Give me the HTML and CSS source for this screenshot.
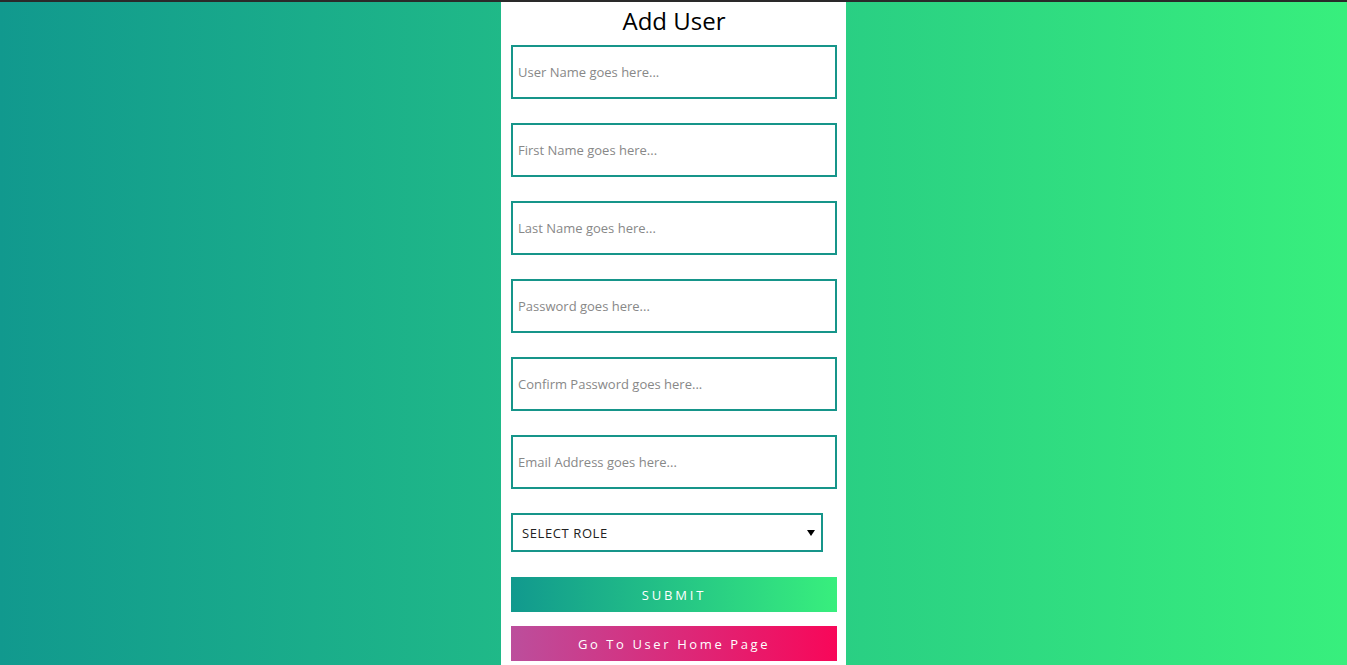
FILE: index.html
```html
<!DOCTYPE html>
<html lang="en">
<head>
<meta charset="utf-8">
<title>Add User</title>
<link rel="stylesheet" href="styles.css">
</head>
<body>
<div class="page">
  <form class="card">
    <h2 class="title">Add User</h2>
    <input class="field" type="text" placeholder="User Name goes here...">
    <input class="field" type="text" placeholder="First Name goes here...">
    <input class="field" type="text" placeholder="Last Name goes here...">
    <input class="field" type="password" placeholder="Password goes here...">
    <input class="field" type="password" placeholder="Confirm Password goes here...">
    <input class="field" type="email" placeholder="Email Address goes here...">
    <select class="role">
      <option>SELECT ROLE</option>
    </select>
    <button class="btn btn-submit" type="button">SUBMIT</button>
    <button class="btn btn-home" type="button">Go To User Home Page</button>
  </form>
</div>
</body>
</html>
```
FILE: styles.css
```css
html, body {
  margin: 0;
  padding: 0;
  height: 100%;
  overflow: hidden;
}
body {
  font-family: "Open Sans", "Liberation Sans", sans-serif;
  border-top: 2px solid #2a2a2a;
  box-sizing: border-box;
  background: linear-gradient(to right, #11998e, #38ef7d);
}
.page {
  display: flex;
  justify-content: center;
  height: 100%;
}
.card {
  width: 345px;
  box-sizing: border-box;
  background: #fff;
  padding: 0 9px 10px 10px;
  display: flex;
  flex-direction: column;
  align-items: flex-start;
}
.card > * {
  flex-shrink: 0;
}
.title {
  align-self: stretch;
  margin: 0 0 5px 0;
  text-align: center;
  font-weight: 400;
  font-size: 24px;
  line-height: 38px;
  color: #000;
}
.field {
  width: 326px;
  height: 54px;
  box-sizing: border-box;
  border: 2px solid #16958a;
  padding: 0 5px;
  margin: 0 0 24px 0;
  font-family: inherit;
  font-size: 13px;
  color: #333;
  outline: none;
}
.field::placeholder {
  color: #888;
}
.role {
  appearance: none;
  -webkit-appearance: none;
  width: 312px;
  height: 39px;
  box-sizing: border-box;
  border: 2px solid #16958a;
  border-radius: 0;
  padding: 0 9px;
  margin: 0 0 25px 0;
  background: #fff url("data:image/svg+xml;utf8,<svg xmlns='http://www.w3.org/2000/svg' width='8' height='8'><path d='M0 1h8L4 7z' fill='black'/></svg>") no-repeat right 6px center;
  font-family: inherit;
  font-size: 13px;
  letter-spacing: 0.6px;
  color: #222;
}
.btn {
  width: 326px;
  height: 35px;
  border: 0;
  padding: 0;
  font-family: inherit;
  font-size: 13px;
  color: #fff;
  cursor: pointer;
}
.btn-submit {
  background: linear-gradient(to right, #11998e, #38ef7d);
  letter-spacing: 2.8px;
  margin-bottom: 14px;
}
.btn-home {
  background: linear-gradient(to right, #bc4e9c, #f80759);
  letter-spacing: 2.6px;
}
```
